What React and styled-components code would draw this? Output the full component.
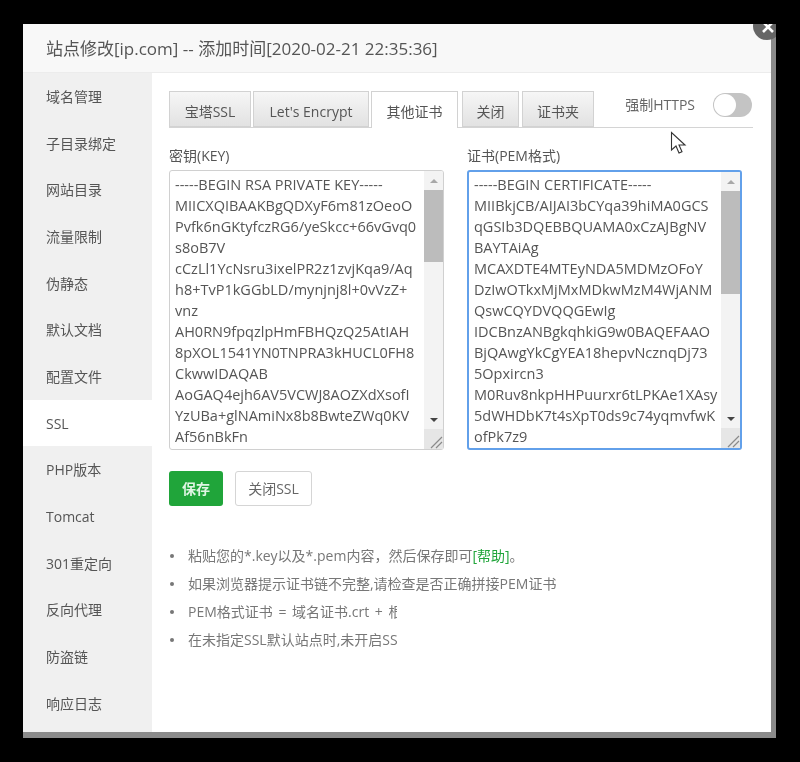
import React from "react";
import styled, { createGlobalStyle } from "styled-components";

const Global = createGlobalStyle`
  html, body { margin: 0; padding: 0; background: #000; }
  body { font-family: "Open Sans", "Noto Sans CJK SC", sans-serif; color: #555; }
  #root { width: 800px; height: 762px; overflow: hidden; background: #000; }
`;

const Frame = styled.div`
  position: relative;
  box-sizing: border-box;
  width: 753px;
  height: 714px;
  margin: 24px 0 0 23px;
  padding: 0 5px 6px 0;
  background: #8b8b8b;
  overflow: hidden;
  filter: blur(0.5px);
`;
const Modal = styled.div`
  display: flex;
  flex-direction: column;
  height: 100%;
  background: #fff;
`;
const Close = styled.div`
  position: absolute;
  top: -12px;
  right: -5px;
  width: 28px;
  height: 28px;
  padding: 2px 0 0 2px;
  box-sizing: border-box;
  border-radius: 50%;
  background: #666;
  display: flex;
  align-items: center;
  justify-content: center;
`;
const Header = styled.div`
  box-sizing: border-box;
  height: 49px;
  flex: none;
  padding-left: 23px;
  line-height: 49px;
  font-size: 17px;
  color: #555;
  background: #f8f8f8;
  border-bottom: 1px solid #ececec;
`;
const Body = styled.div`
  flex: 1;
  display: flex;
  min-height: 0;
`;
const Side = styled.div`
  width: 129px;
  flex: none;
  background: #f0f0f0;
  display: flex;
  flex-direction: column;
`;
const SideItem = styled.div`
  height: 46.67px;
  flex: none;
  padding-left: 23px;
  line-height: 48px;
  font-size: 14px;
  color: #555;
  background: ${p => (p.$active ? "#fff" : "transparent")};
`;
const Main = styled.div`
  flex: 1;
  padding: 18px 0 0 17px;
`;
const TabBar = styled.div`
  width: 584px;
  height: 37px;
  box-sizing: border-box;
  display: flex;
  border-bottom: 1px solid #d4d4d4;
`;
const Tab = styled.div`
  box-sizing: border-box;
  width: ${p => p.$w}px;
  height: ${p => (p.$active ? 37 : 36)}px;
  margin-right: ${p => p.$gap}px;
  text-align: center;
  line-height: 40px;
  font-size: 14px;
  color: #555;
  border: 1px solid #d2d2d2;
  ${p => (p.$active
    ? "border-bottom: 0; background: #fff;"
    : "background: linear-gradient(#f6f6f6, #e2e2e2);")}
`;
const Force = styled.div`
  margin-left: auto;
  display: flex;
  align-items: flex-start;
  font-size: 14px;
  color: #666;
`;
const ForceLabel = styled.span`
  line-height: 28px;
  margin-right: 18px;
`;
const Switch = styled.div`
  width: 39px;
  height: 24px;
  margin: 2px 1px 0 0;
  border-radius: 12px;
  background: #c4c4c4;
  position: relative;
  &::before {
    content: "";
    position: absolute;
    left: 1px;
    top: 1px;
    width: 22px;
    height: 22px;
    border-radius: 50%;
    background: #fff;
  }
`;
const Fields = styled.div`
  display: grid;
  grid-template-columns: 275px 275px;
  column-gap: 23px;
  margin-top: 16px;
`;
const Field = styled.div`
  display: flex;
  flex-direction: column;
`;
const FieldLabel = styled.div`
  height: 26px;
  line-height: 24px;
  font-size: 14px;
  color: #555;
`;
const CodeBox = styled.div`
  box-sizing: border-box;
  height: 280px;
  display: flex;
  overflow: hidden;
  background: #fff;
  border-radius: 3px;
  border: ${p => (p.$focus ? "2px solid #62a0ea" : "1px solid #d0d0d0")};
`;
const Code = styled.div`
  flex: 1;
  min-width: 0;
  padding: ${p => (p.$focus ? "2px 0 0 5px" : "3px 0 0 5px")};
  font-size: 14.5px;
  line-height: 21px;
  color: #555;
  white-space: nowrap;
  overflow: hidden;
`;
const Bar = styled.div`
  width: 19px;
  flex: none;
  display: flex;
  flex-direction: column;
  align-items: center;
  background: #f3f3f3;
`;
const ArrowBox = styled.div`
  height: 19px;
  width: 100%;
  flex: none;
  display: flex;
  align-items: center;
  justify-content: center;
`;
const UpArrow = styled.div`
  border-left: 4px solid transparent;
  border-right: 4px solid transparent;
  border-bottom: 4px solid #a8a8a8;
`;
const DownArrow = styled.div`
  border-left: 4px solid transparent;
  border-right: 4px solid transparent;
  border-top: 4px solid #444;
`;
const Thumb = styled.div`
  width: 100%;
  height: ${p => p.$h}px;
  flex: none;
  background: #bcbcbc;
`;
const Spring = styled.div`
  flex: 1;
`;
const Corner = styled.div`
  width: 100%;
  height: 20px;
  flex: none;
  background: #e6e6e6;
  display: flex;
  align-items: flex-end;
  justify-content: flex-end;
`;
const Actions = styled.div`
  display: flex;
  gap: 12px;
  margin-top: 21px;
`;
const SaveBtn = styled.div`
  width: 54px;
  height: 35px;
  line-height: 36px;
  text-align: center;
  border-radius: 3px;
  background: #20a53a;
  color: #dff5e3;
  font-size: 14px;
  font-weight: 700;
`;
const GhostBtn = styled.div`
  box-sizing: border-box;
  width: 77px;
  height: 35px;
  line-height: 34px;
  text-align: center;
  border-radius: 3px;
  background: #fff;
  border: 1px solid #d5d5d5;
  font-size: 14px;
  color: #666;
`;
const Notes = styled.ul`
  list-style: none;
  margin: 36px 0 0;
  padding: 0;
`;
const Note = styled.li`
  position: relative;
  height: 28px;
  line-height: 28px;
  padding-left: 19px;
  font-size: 14px;
  word-spacing: 2px;
  color: #777;
  white-space: nowrap;
  &::before {
    content: "";
    position: absolute;
    left: 1px;
    top: 12px;
    width: 4px;
    height: 4px;
    border-radius: 50%;
    background: #777;
  }
`;
const Clipped = styled.span`
  display: inline-block;
  max-width: 209px;
  overflow: hidden;
  vertical-align: top;
`;
const Help = styled.span`
  color: #20a53a;
`;
const Pointer = styled.svg`
  position: absolute;
  left: 647px;
  top: 107px;
`;

const menu = ["域名管理","子目录绑定","网站目录","流量限制","伪静态","默认文档","配置文件","SSL","PHP版本","Tomcat","301重定向","反向代理","防盗链","响应日志"];
const tabs = [
  { t: "宝塔SSL", w: 82, gap: 2 },
  { t: "Let's Encrypt", w: 116, gap: 2 },
  { t: "其他证书", w: 87, gap: 4, active: true },
  { t: "关闭", w: 57, gap: 3 },
  { t: "证书夹", w: 72, gap: 0 },
];
const keyLines = ["-----BEGIN RSA PRIVATE KEY-----","MIICXQIBAAKBgQDXyF6m81zOeoO","Pvfk6nGKtyfczRG6/yeSkcc+66vGvq0","s8oB7V","cCzLl1YcNsru3ixelPR2z1zvjKqa9/Aq","h8+TvP1kGGbLD/mynjnj8l+0vVzZ+","vnz","AH0RN9fpqzlpHmFBHQzQ25AtIAH","8pXOL1541YN0TNPRA3kHUCL0FH8","CkwwIDAQAB","AoGAQ4ejh6AV5VCWJ8AOZXdXsofI","YzUBa+glNAmiNx8b8BwteZWq0KV","Af56nBkFn"];
const certLines = ["-----BEGIN CERTIFICATE-----","MIIBkjCB/AIJAI3bCYqa39hiMA0GCS","qGSIb3DQEBBQUAMA0xCzAJBgNV","BAYTAiAg","MCAXDTE4MTEyNDA5MDMzOFoY","DzIwOTkxMjMxMDkwMzM4WjANM","QswCQYDVQQGEwIg","IDCBnzANBgkqhkiG9w0BAQEFAAO","BjQAwgYkCgYEA18hepvNcznqDj73","5Opxircn3","M0Ruv8nkpHHPuurxr6tLPKAe1XAsy","5dWHDbK7t4sXpT0ds9c74yqmvfwK","ofPk7z9"];

const CodeField = ({ label, lines, thumb, focus }) => (
  <Field>
    <FieldLabel>{label}</FieldLabel>
    <CodeBox $focus={focus}>
      <Code $focus={focus}>{lines.map(l => <div key={l}>{l}</div>)}</Code>
      <Bar>
        <ArrowBox><UpArrow /></ArrowBox>
        <Thumb $h={thumb} />
        <Spring />
        <ArrowBox><DownArrow /></ArrowBox>
        <Corner>
          <svg width="14" height="14" viewBox="0 0 14 14">
            <path d="M2 13 13 2M7 13 13 7" stroke="#8a8a8a" strokeWidth="1.2" fill="none" />
          </svg>
        </Corner>
      </Bar>
    </CodeBox>
  </Field>
);

export default function App() {
  return (
    <>
      <Global />
      <Frame>
        <Modal>
          <Header>站点修改[ip.com] -- 添加时间[2020-02-21 22:35:36]</Header>
          <Body>
            <Side>
              {menu.map(m => <SideItem key={m} $active={m === "SSL"}>{m}</SideItem>)}
            </Side>
            <Main>
              <TabBar>
                {tabs.map(t => <Tab key={t.t} $w={t.w} $gap={t.gap} $active={t.active}>{t.t}</Tab>)}
                <Force>
                  <ForceLabel>强制HTTPS</ForceLabel>
                  <Switch />
                </Force>
              </TabBar>
              <Fields>
                <CodeField label="密钥(KEY)" lines={keyLines} thumb={72} />
                <CodeField label="证书(PEM格式)" lines={certLines} thumb={103} focus />
              </Fields>
              <Actions>
                <SaveBtn>保存</SaveBtn>
                <GhostBtn>关闭SSL</GhostBtn>
              </Actions>
              <Notes>
                <Note>粘贴您的*.key以及*.pem内容，然后保存即可<Help>[帮助]</Help>。</Note>
                <Note>如果浏览器提示证书链不完整,请检查是否正确拼接PEM证书</Note>
                <Note><Clipped>PEM格式证书 = 域名证书.crt + 根证书(CA证书).crt</Clipped></Note>
                <Note><Clipped>在未指定SSL默认站点时,未开启SSL的站点使用HTTPS会直接访问到已开启SSL的站点</Clipped></Note>
              </Notes>
            </Main>
          </Body>
        </Modal>
        <Close>
          <svg width="14" height="14" viewBox="0 0 14 14">
            <path d="M2 2 12 12M12 2 2 12" stroke="#fff" strokeWidth="2.6" fill="none" />
          </svg>
        </Close>
        <Pointer width="18" height="24" viewBox="0 0 18 24">
          <path d="M1.5 1.5V19L6 15l3 7 3-1.3-3-6.7h6z" fill="#fff" stroke="#333" strokeWidth="1.1" />
        </Pointer>
      </Frame>
    </>
  );
}
